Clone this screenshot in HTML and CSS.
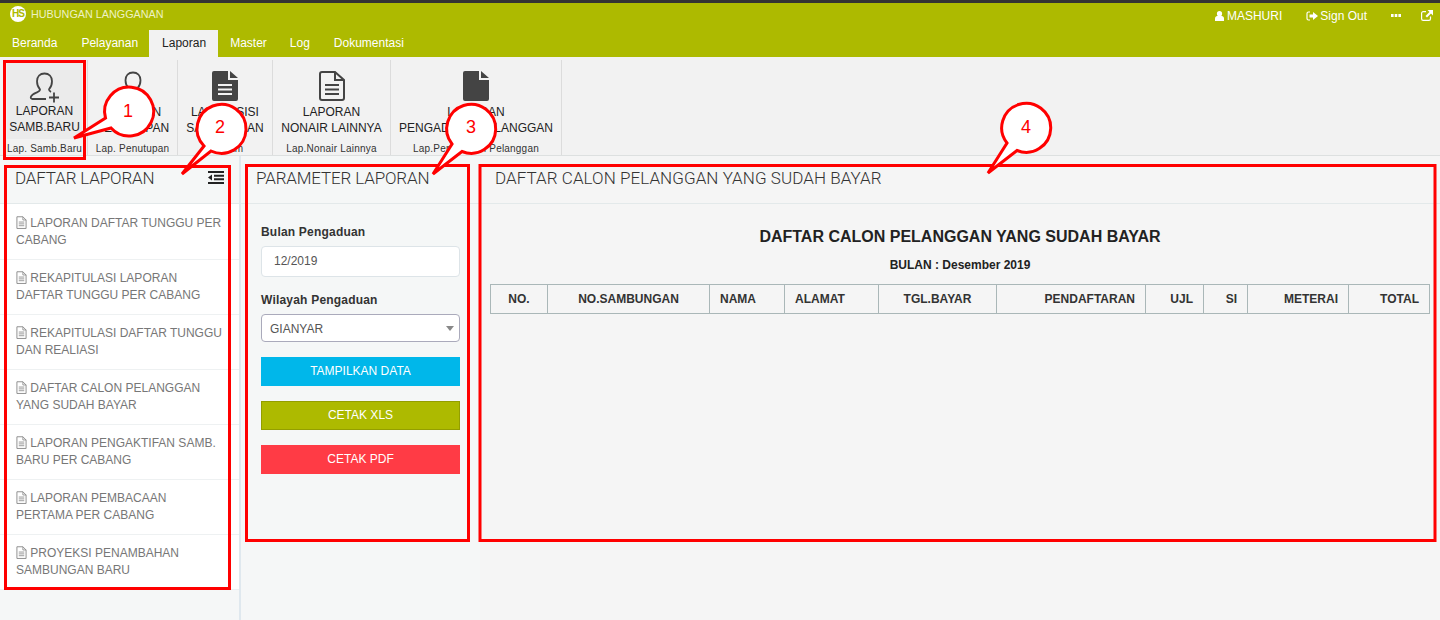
FILE: index.html
```html
<!DOCTYPE html>
<html lang="id">
<head>
<meta charset="utf-8">
<title>Hubungan Langganan</title>
<link rel="stylesheet" href="styles.css">
</head>
<body>
<svg width="0" height="0" class="defs">
  <defs>
    <symbol id="doc-o" viewBox="0 0 24 28"><path fill="none" stroke="currentColor" stroke-width="2" d="M2 1.500h13l7 7v18.500h-20z"/><path fill="none" stroke="currentColor" stroke-width="1.800" d="M15 1.500v7h7M6 13h12M6 17h12M6 21h12"/></symbol>
    <symbol id="doc-s" viewBox="0 0 26 30"><path fill="currentColor" d="M2 0h14v9h10v19a2 2 0 0 1-2 2H2a2 2 0 0 1-2-2V2a2 2 0 0 1 2-2zM18 0l8 7h-8z"/></symbol>
  </defs>
</svg>
<header class="topbar">
  <div class="brand-row">
    <div class="brand">
      <span class="logo">HS</span>
      <span class="brand-name">HUBUNGAN LANGGANAN</span>
    </div>
    <div class="user-nav">
      <span class="nav-item user"><svg class="ico" width="9" height="10" viewBox="0 0 9 10"><circle cx="4.500" cy="2.700" r="2.600" fill="currentColor"/><path fill="currentColor" d="M0 10V7.500C0 6 1 5 2.300 5h4.400C8 5 9 6 9 7.500V10z"/></svg>MASHURI</span>
      <span class="nav-item signout"><svg class="ico" width="12" height="10" viewBox="0 0 12 10"><path fill="none" stroke="currentColor" stroke-width="1.200" d="M4 1H2.500A1.500 1.500 0 0 0 1 2.500v5A1.500 1.500 0 0 0 2.500 9H4"/><path fill="currentColor" d="M3.500 3.500h3.500V1l5 4-5 4V6.500H3.500z"/></svg>Sign Out</span>
      <span class="nav-item dots"><svg width="10" height="3" viewBox="0 0 10 3"><path fill="currentColor" d="M0 0h2.600v3H0zM3.700 0h2.600v3H3.700zM7.400 0H10v3H7.400z"/></svg></span>
      <span class="nav-item ext"><svg width="12" height="11" viewBox="0 0 12 11"><path fill="none" stroke="currentColor" stroke-width="1.200" d="M9.500 6.500v2.300a1.600 1.600 0 0 1-1.600 1.600H2.200A1.600 1.600 0 0 1 .6 8.800V3.200a1.600 1.600 0 0 1 1.600-1.600H5"/><path fill="currentColor" d="M6.500 0H12v5.500L10 3.500 6 7.500 4.500 6l4-4z"/></svg></span>
    </div>
  </div>
  <nav class="tabs">
    <a class="tab">Beranda</a>
    <a class="tab">Pelayanan</a>
    <a class="tab active">Laporan</a>
    <a class="tab master">Master</a>
    <a class="tab">Log</a>
    <a class="tab">Dokumentasi</a>
  </nav>
</header>

<section class="ribbon">
  <div class="group g1">
    <div class="rbtn on">
      <svg class="rico" width="32" height="32" viewBox="0 0 32 32"><path fill="none" stroke="#444" stroke-width="1.800" d="M17 27H3.500c-1.500 0-2-1-1.600-2.200C2.800 22.200 5 21.500 8 20.300c2-.8 3-1.500 3-3-2-2-3-4.500-3-8C8 4.500 11 1.500 15.500 1.500S23 4.500 23 9.300c0 3.500-1 6-3 8 0 1.300.5 2 2 2.700"/><path fill="none" stroke="#444" stroke-width="1.800" d="M25 20.500v10M20 25.500h10"/></svg>
      <span>LAPORAN<br>SAMB.BARU</span>
    </div>
    <div class="cap">Lap. Samb.Baru</div>
  </div>
  <div class="group g2">
    <div class="rbtn">
      <svg class="rico" width="32" height="32" viewBox="0 0 32 32"><path fill="none" stroke="#444" stroke-width="1.800" d="M8 27H4c-1.500 0-2-1-1.600-2.200C3.300 22.200 5.500 21.500 8.500 20.300c2-.8 3-1.500 3-3-2-2-3-4.500-3-8C8.500 4.500 11.500 1.500 16 1.500s7.500 3 7.500 7.800c0 3.500-1 6-3 8 0 1.500 1 2.200 3 3 3 1.200 5.200 1.900 6.100 4.500.4 1.200-.1 2.200-1.600 2.200H8z"/></svg>
      <span>LAPORAN<br>PENUTUPAN</span>
    </div>
    <div class="cap">Lap. Penutupan</div>
  </div>
  <div class="group g3">
    <div class="rbtn">
      <svg class="rico doc" width="26" height="30" viewBox="0 0 26 30"><path fill="#444" d="M2 0h14v9h10v19a2 2 0 0 1-2 2H2a2 2 0 0 1-2-2V2a2 2 0 0 1 2-2zM18 0l8 7h-8z"/><path fill="none" stroke="#f2f2f2" stroke-width="2" d="M6 14h14M6 18.500h14M6 23h14"/></svg>
      <span>LAP. POSISI<br>SAMBUNGAN</span>
    </div>
    <div class="cap">Lapsam</div>
  </div>
  <div class="group g4">
    <div class="rbtn">
      <svg class="rico doc" width="26" height="30" viewBox="0 0 26 30"><path fill="none" stroke="#444" stroke-width="2" d="M3 1h13l9 8v18a2 2 0 0 1-2 2H3a2 2 0 0 1-2-2V3a2 2 0 0 1 2-2z"/><path fill="none" stroke="#444" stroke-width="2" d="M16 1v8h9M6 14h14M6 18.500h14M6 23h14"/></svg>
      <span>LAPORAN<br>NONAIR LAINNYA</span>
    </div>
    <div class="cap">Lap.Nonair Lainnya</div>
  </div>
  <div class="group g5">
    <div class="rbtn">
      <svg class="rico doc" width="26" height="30" viewBox="0 0 26 30"><use href="#doc-s" color="#444"/></svg>
      <span>LAPORAN<br>PENGADUAN PELANGGAN</span>
    </div>
    <div class="cap">Lap.Pengaduan Pelanggan</div>
  </div>
</section>

<main class="workspace">
  <aside class="col-list">
    <div class="panel-head">
      <h2>DAFTAR LAPORAN</h2>
      <svg class="indent" width="16" height="13" viewBox="0 0 16 13"><path fill="#222" d="M0 0h16v2H0zM6 3.700h10v2H6zM6 7.300h10v2H6zM0 11h16v2H0zM4 3.500v6L0 6.500z"/></svg>
    </div>
    <ul class="report-list">
      <li><svg class="lico" width="11" height="13"><use href="#doc-o"/></svg> LAPORAN DAFTAR TUNGGU PER CABANG</li>
      <li><svg class="lico" width="11" height="13"><use href="#doc-o"/></svg> REKAPITULASI LAPORAN DAFTAR TUNGGU PER CABANG</li>
      <li><svg class="lico" width="11" height="13"><use href="#doc-o"/></svg> REKAPITULASI DAFTAR TUNGGU DAN REALIASI</li>
      <li><svg class="lico" width="11" height="13"><use href="#doc-o"/></svg> DAFTAR CALON PELANGGAN YANG SUDAH BAYAR</li>
      <li><svg class="lico" width="11" height="13"><use href="#doc-o"/></svg> LAPORAN PENGAKTIFAN SAMB. BARU PER CABANG</li>
      <li><svg class="lico" width="11" height="13"><use href="#doc-o"/></svg> LAPORAN PEMBACAAN PERTAMA PER CABANG</li>
      <li><svg class="lico" width="11" height="13"><use href="#doc-o"/></svg> PROYEKSI PENAMBAHAN SAMBUNGAN BARU</li>
    </ul>
  </aside>

  <section class="col-param">
    <div class="panel-head"><h2>PARAMETER LAPORAN</h2></div>
    <form class="param-form">
      <label class="lbl">Bulan Pengaduan</label>
      <div class="input">12/2019</div>
      <label class="lbl second">Wilayah Pengaduan</label>
      <div class="select">GIANYAR<span class="caret"></span></div>
      <div class="btn cyan">TAMPILKAN DATA</div>
      <div class="btn green">CETAK XLS</div>
      <div class="btn red">CETAK PDF</div>
    </form>
  </section>

  <section class="col-data">
    <div class="panel-head"><h2>DAFTAR CALON PELANGGAN YANG SUDAH BAYAR</h2></div>
    <h1 class="rep-title">DAFTAR CALON PELANGGAN YANG SUDAH BAYAR</h1>
    <p class="rep-sub">BULAN : Desember 2019</p>
    <table class="rep-table">
      <colgroup>
        <col class="c1"><col class="c2"><col class="c3"><col class="c4"><col class="c5"><col class="c6"><col class="c7"><col class="c8"><col class="c9"><col class="c10">
      </colgroup>
      <thead>
        <tr>
          <th class="ctr">NO.</th><th class="ctr">NO.SAMBUNGAN</th><th class="lft">NAMA</th><th class="lft">ALAMAT</th><th class="ctr">TGL.BAYAR</th><th class="rgt">PENDAFTARAN</th><th class="rgt">UJL</th><th class="rgt">SI</th><th class="rgt">METERAI</th><th class="rgt">TOTAL</th>
        </tr>
      </thead>
    </table>
  </section>
</main>

<svg class="notes" width="1440" height="620" viewBox="0 0 1440 620">
  <g fill="none" stroke="#f00" stroke-width="3">
    <rect x="4.500" y="61.500" width="80" height="97"/>
    <rect x="5.500" y="166.500" width="224" height="422"/>
    <rect x="246.500" y="165.500" width="222" height="375"/>
    <rect x="480" y="165.500" width="955" height="375"/>
  </g>
  <g fill="#fff" stroke="#f00" stroke-width="3" stroke-linejoin="miter">
    <path d="M74 138 105.500 118A24.500 24.500 0 1 1 111 128z"/>
    <path d="M182 174 204 146A24.500 24.500 0 1 1 211 151z"/>
    <path d="M433 174 452 144A24.500 24.500 0 1 1 462 151.500z"/>
    <path d="M988 173 1007 143A24.500 24.500 0 1 1 1017 150.500z"/>
  </g>
  <g class="num">
    <text x="128" y="117">1</text>
    <text x="220" y="133">2</text>
    <text x="471" y="133">3</text>
    <text x="1026" y="133">4</text>
  </g>
</svg>
</body>
</html>
```
FILE: styles.css
```css
* { box-sizing: border-box; }
html, body { margin: 0; padding: 0; }
body {
  width: 1440px;
  height: 620px;
  overflow: hidden;
  position: relative;
  font-family: "Liberation Sans", Arial, sans-serif;
  font-size: 12px;
  color: #222;
  background: #f5f7f7;
}
.defs { position: absolute; }

.topbar {
  height: 57px;
  background: #adba00;
  border-top: 3px solid #333;
  color: #fff;
}
.brand-row {
  height: 27px;
  display: flex;
  align-items: center;
  justify-content: space-between;
  padding: 0 7px 0 10px;
}
.brand { display: flex; align-items: center; gap: 5px; margin-top: -5px; }
.logo {
  width: 16px;
  height: 16px;
  border-radius: 50%;
  background: #fff;
  color: #adba00;
  font-size: 10px;
  letter-spacing: -1px;
  font-weight: bold;
  line-height: 16px;
  text-align: center;
}
.brand-name { font-size: 10.8px; color: #eef2c4; }
.user-nav { display: flex; align-items: center; margin-top: -2px; }
.nav-item { display: flex; align-items: center; gap: 3px; }
.user { margin-right: 23px; position: relative; left: -1px; }
.signout { margin-right: 24px; gap: 2px; }
.dots { margin-right: 20px; }

.tabs { display: flex; height: 27px; }
.tab {
  padding: 0 12px;
  line-height: 27px;
  color: #fff;
}
.tab.active { background: #f2f2f2; color: #222; margin-left: -1px; padding-left: 13px; }
.tab.master { margin-right: -1px; }

.ribbon {
  height: 99px;
  background: #f2f2f2;
  border-bottom: 1px solid #dde0e0;
  display: flex;
  padding: 3px 0 0 0;
}
.group {
  display: flex;
  flex-direction: column;
  align-items: center;
  height: 95px;
  border-right: 1px solid #dcdcdc;
}
.g1 { width: 88px; padding: 3px 5px 0 7px; }
.g2 { width: 90px; }
.g3 { width: 95px; }
.g4 { width: 118px; }
.g5 { width: 171px; }
.rbtn {
  flex: none;
  height: 82px;
  padding-top: 11px;
  width: 100%;
  text-align: center;
  line-height: 16px;
  color: #222;
  white-space: nowrap;
}
.g1 .rbtn { height: 76px; padding-top: 9px; background: #ebebeb; }
.g1 .cap { margin-top: 4px; }
.g2 .cap, .g3 .cap, .g4 .cap, .g5 .cap { margin-top: 1px; }
.rico { display: block; margin: 0 auto -1px; }
.g2 .rico { margin-bottom: 1px; }
.rico.doc { margin-bottom: 3px; }
.cap { font-size: 10px; letter-spacing: 0.2px; color: #333; white-space: nowrap; line-height: 12px; }

.workspace { display: flex; height: 464px; }
.col-list {
  width: 241px;
  border-right: 2px solid #dfe8ee;
}
.col-param { width: 239px; background: #f5f7f7; }
.col-data { flex: 1; background: #f5f5f5; }
.panel-head {
  height: 48px;
  padding: 13px 15px 0;
  border-bottom: 1px solid #e3e9ea;
  display: flex;
  justify-content: space-between;
}
.panel-head h2 {
  margin: 0;
  font-family: Roboto, "Liberation Sans", sans-serif;
  font-weight: 300;
  font-size: 17px;
  line-height: 19px;
  color: #333;
  letter-spacing: -0.15px;
}
.col-data .panel-head h2 { letter-spacing: 0.06px; }
.indent { margin: 2px 0 0 0; }
.report-list { list-style: none; margin: 0; padding: 1px 0 0; background: #fff; }
.report-list li {
  height: 55px;
  padding: 10px 16px 0;
  line-height: 17px;
  color: #777;
  border-bottom: 1px solid #eef1f2;
}
.lico { vertical-align: -2px; color: #888; }

.param-form { padding: 21px 20px 0; }
.lbl { display: block; font-weight: bold; line-height: 14px; color: #333; letter-spacing: 0.2px; }
.lbl.second { margin-top: 16px; }
.input, .select {
  width: 199px;
  background: #fff;
  border: 1px solid #dde4e8;
  border-radius: 4px;
  color: #555;
}
.input { height: 31px; line-height: 29px; padding-left: 12px; margin-top: 7px; }
.select {
  height: 28px;
  line-height: 28px;
  padding-left: 8px;
  border-color: #aab;
  position: relative;
  margin-top: 7px;
  margin-bottom: 15px;
}
.caret {
  position: absolute;
  right: 5px;
  top: 11px;
  border-left: 4px solid transparent;
  border-right: 4px solid transparent;
  border-top: 5px solid #888;
}
.btn {
  width: 199px;
  height: 29px;
  line-height: 27px;
  text-align: center;
  color: #fff;
  margin-bottom: 15px;
  border: 1px solid transparent;
}
.cyan { background: #00b7ea; }
.green { background: #adba00; border-color: #939e00; }
.red { background: #ff3b45; }

.rep-title {
  margin: 24px 0 0;
  text-align: center;
  font-size: 16px;
  line-height: 18px;
  font-weight: bold;
  color: #222;
}
.rep-sub {
  margin: 12px 0 0;
  text-align: center;
  font-weight: bold;
  font-size: 12px;
  line-height: 14px;
  color: #222;
}
.rep-table {
  margin: 12px 0 0 10px;
  width: 939px;
  table-layout: fixed;
  border-collapse: collapse;
}
.rep-table th {
  height: 29px;
  border: 1px solid #aab7b8;
  padding: 0 10px;
  font-size: 12px;
  color: #333;
}
.c1 { width: 57px; }
.c2 { width: 162px; }
.c3 { width: 75px; }
.c4 { width: 94px; }
.c5 { width: 118px; }
.c6 { width: 149px; }
.c7 { width: 58px; }
.c8 { width: 44px; }
.c9 { width: 101px; }
.c10 { width: 81px; }
.ctr { text-align: center; }
.lft { text-align: left; }
.rgt { text-align: right; }

.notes { position: absolute; left: 0; top: 0; pointer-events: none; }
.num text {
  font-family: "Liberation Sans", Arial, sans-serif;
  font-size: 18px;
  fill: #f00;
  text-anchor: middle;
}
```
